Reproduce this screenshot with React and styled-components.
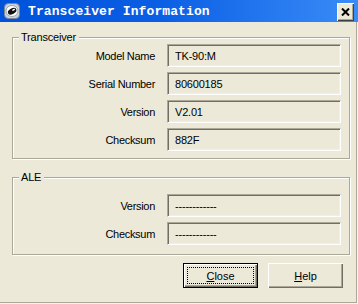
import React from "react";
import styled, { createGlobalStyle } from "styled-components";

const GlobalStyle = createGlobalStyle`
  html, body {
    margin: 0;
    padding: 0;
    background: #ece9d8;
  }
`;

const Window = styled.div`
  width: 358px;
  height: 304px;
  box-sizing: border-box;
  background: #ece9d8;
  font-family: "Liberation Sans", Arial, sans-serif;
  font-size: 11px;
  color: #000;
  display: flex;
  flex-direction: column;
  box-shadow: inset -1px -1px 0 #f5f4ee, inset -2px -2px 0 #aca899;
`;

const TitleBar = styled.div`
  height: 22px;
  flex: none;
  display: flex;
  align-items: center;
  padding: 0 4px 0 4px;
  background: linear-gradient(to right, #0052db 0%, #0b5fe4 45%, #3a8cf7 100%);
`;

const TitleText = styled.span`
  margin-left: 8px;
  font-family: "Liberation Mono", "Courier New", monospace;
  font-weight: bold;
  font-size: 13px;
  color: #fff;
  letter-spacing: 0.1px;
`;

const CloseX = styled.div`
  margin-left: auto;
  width: 17px;
  height: 18px;
  margin-top: 1px;
  box-sizing: border-box;
  background: #ece9d8;
  box-shadow: inset 1px 1px 0 #fff, inset -1px -1px 0 #404040,
    inset -2px -2px 0 #aca899;
  display: flex;
  align-items: center;
  justify-content: center;
`;

const Body = styled.div`
  padding: 15px 8px 0 12px;
  display: flex;
  flex-direction: column;
`;

const Group = styled.div`
  position: relative;
  border: 1px solid #aca899;
  box-shadow: inset 1px 1px 0 #fff, 1px 1px 0 #fff;
  padding: ${(p) => p.$pad};
  margin-bottom: ${(p) => p.$gapAfter}px;
`;

const Legend = styled.span`
  position: absolute;
  top: -7px;
  left: 6px;
  padding: 0 3px 0 2px;
  line-height: 13px;
  background: #ece9d8;
  letter-spacing: -0.2px;
`;

const Fields = styled.div`
  display: grid;
  grid-template-columns: 142px 174px;
  column-gap: 12px;
  row-gap: ${(p) => p.$rowGap}px;
  align-items: center;
`;

const Label = styled.div`
  text-align: right;
  letter-spacing: -0.3px;
`;

const ValueBox = styled.div`
  height: 23px;
  box-sizing: border-box;
  border-top: 1px solid #aca899;
  border-left: 1px solid #aca899;
  border-bottom: 1px solid #fff;
  border-right: 1px solid #fff;
  box-shadow: inset 1px 1px 0 #716f64, inset -1px -1px 0 #f1efe2;
  padding-left: 7px;
  display: flex;
  align-items: center;
  letter-spacing: -0.2px;
`;

const ButtonRow = styled.div`
  display: flex;
  justify-content: flex-end;
  gap: 10px;
  margin-top: 8px;
  padding-right: 7px;
`;

const Button = styled.button`
  width: 75px;
  height: 25px;
  box-sizing: border-box;
  font-family: "Liberation Sans", Arial, sans-serif;
  font-size: 11px;
  color: #000;
  background: #ece9d8;
  border: ${(p) => (p.$default ? "1px solid #000" : "none")};
  box-shadow: inset 1px 1px 0 #fff, inset -1px -1px 0 #716f64,
    inset -2px -2px 0 #aca899;
  outline: ${(p) => (p.$default ? "1px dotted #000" : "none")};
  outline-offset: -5px;
  padding: 0;
  cursor: pointer;
  u {
    text-decoration-thickness: 1px;
    text-underline-offset: 1px;
  }
`;

const AppIcon = () => (
  <svg width="16" height="16" viewBox="0 0 16 16">
    <rect x="0.5" y="0.5" width="15" height="15" rx="4" fill="#c9d1dc" stroke="#7d8896" />
    <ellipse cx="8" cy="8" rx="6" ry="5.5" fill="#fff" stroke="#9aa4b0" />
    <ellipse cx="8" cy="8.3" rx="4.6" ry="2.8" transform="rotate(-30 8 8)" fill="#111" />
    <ellipse cx="9.6" cy="6.8" rx="1.6" ry="0.8" transform="rotate(-30 9.6 6.8)" fill="#fff" />
  </svg>
);

const transceiver = [
  ["Model Name", "TK-90:M"],
  ["Serial Number", "80600185"],
  ["Version", "V2.01"],
  ["Checksum", "882F"],
];

const ale = [
  ["Version", "------------"],
  ["Checksum", "------------"],
];

const FieldList = ({ rows, rowGap }) => (
  <Fields $rowGap={rowGap}>
    {rows.map(([label, value]) => (
      <React.Fragment key={label}>
        <Label>{label}</Label>
        <ValueBox>{value}</ValueBox>
      </React.Fragment>
    ))}
  </Fields>
);

export default function App() {
  return (
    <>
      <GlobalStyle />
      <Window>
        <TitleBar>
          <AppIcon />
          <TitleText>Transceiver Information</TitleText>
          <CloseX>
            <svg width="9" height="8" viewBox="0 0 9 8">
              <path d="M1 0.5 L8 7.5 M8 0.5 L1 7.5" stroke="#000" strokeWidth="2" />
            </svg>
          </CloseX>
        </TitleBar>
        <Body>
          <Group $pad="6px 8px 7px 0" $gapAfter={18}>
            <Legend>Transceiver</Legend>
            <FieldList rows={transceiver} rowGap={5} />
          </Group>
          <Group $pad="16px 8px 9px 0" $gapAfter={0}>
            <Legend>ALE</Legend>
            <FieldList rows={ale} rowGap={5} />
          </Group>
          <ButtonRow>
            <Button $default>
              <u>C</u>lose
            </Button>
            <Button>
              <u>H</u>elp
            </Button>
          </ButtonRow>
        </Body>
      </Window>
    </>
  );
}
